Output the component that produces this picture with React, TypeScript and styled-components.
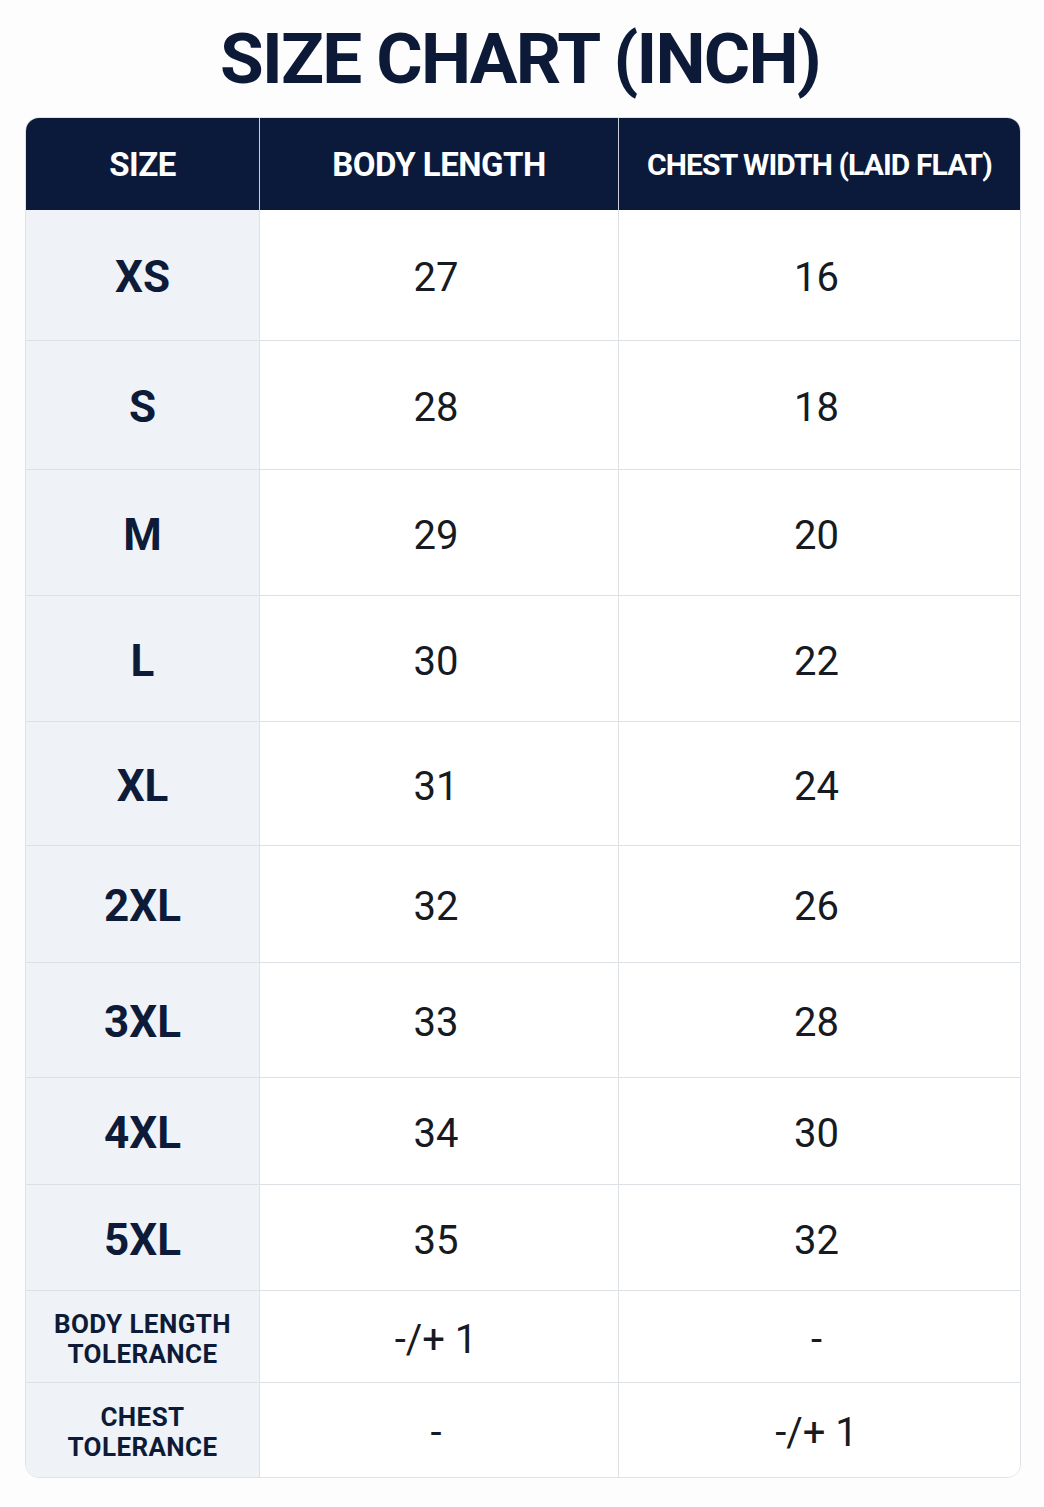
import React from "react";
import styled, { createGlobalStyle } from "styled-components";

const GlobalStyle = createGlobalStyle`
  html, body {
    margin: 0;
    padding: 0;
    background: #fdfdfd;
  }
  body {
    font-family: Roboto, "Noto Sans", "Liberation Sans", sans-serif;
  }
`;

const Page = styled.div`
  width: 1044px;
  min-height: 1507px;
  box-sizing: border-box;
  padding: 18px 23px 0 25px;
  display: flex;
  flex-direction: column;
  align-items: stretch;
`;

const Title = styled.h1`
  margin: 0 0 18px 0;
  height: 81px;
  display: flex;
  align-items: center;
  justify-content: center;
  font-family: Roboto, "Noto Sans", sans-serif;
  font-weight: 700;
  font-size: 71px;
  letter-spacing: -1.8px;
  color: #0c1a38;
  line-height: 1;
  padding-right: 6px;
`;

const Table = styled.div`
  width: 996px;
  box-sizing: border-box;
  border: 1px solid #dfe2e7;
  border-radius: 14px;
  overflow: hidden;
  display: grid;
  grid-template-columns: 234px 359px 1fr;
  background: #ffffff;
`;

const HeadCell = styled.div<{ $last?: boolean; $small?: boolean }>`
  height: 92px;
  background: #0b1a3a;
  color: #ffffff;
  display: flex;
  align-items: center;
  justify-content: center;
  font-family: Roboto, "Noto Sans", sans-serif;
  font-weight: 700;
  font-size: ${(p) => (p.$small ? "30px" : "33px")};
  letter-spacing: ${(p) => (p.$small ? "-0.9px" : "-0.5px")};
  border-right: ${(p) => (p.$last ? "none" : "1px solid #c9ced8")};
`;

const SizeCell = styled.div<{ $h: number; $bottom?: boolean }>`
  height: ${(p) => p.$h}px;
  box-sizing: border-box;
  padding-top: 4px;
  background: #eff3f8;
  color: #0d1b38;
  display: flex;
  align-items: center;
  justify-content: center;
  text-align: center;
  font-weight: 700;
  font-size: 44px;
  border-right: 1px solid #dde0e5;
  border-bottom: ${(p) => (p.$bottom ? "none" : "1px solid #dde0e5")};
`;

const NoteLabel = styled.span`
  font-size: 26px;
  line-height: 30px;
  letter-spacing: 0.4px;
`;

const ValueCell = styled.div<{ $h: number; $bottom?: boolean; $last?: boolean }>`
  height: ${(p) => p.$h}px;
  box-sizing: border-box;
  padding-top: 5px;
  padding-right: 6px;
  background: #ffffff;
  color: #161a22;
  display: flex;
  align-items: center;
  justify-content: center;
  font-weight: 400;
  font-size: 40px;
  border-right: ${(p) => (p.$last ? "none" : "1px solid #dde0e5")};
  border-bottom: ${(p) => (p.$bottom ? "none" : "1px solid #dde0e5")};
`;

type Row = { size: React.ReactNode; body: string; chest: string; h: number };

const rows: Row[] = [
  { size: "XS", body: "27", chest: "16", h: 131 },
  { size: "S", body: "28", chest: "18", h: 129 },
  { size: "M", body: "29", chest: "20", h: 126 },
  { size: "L", body: "30", chest: "22", h: 126 },
  { size: "XL", body: "31", chest: "24", h: 124 },
  { size: "2XL", body: "32", chest: "26", h: 117 },
  { size: "3XL", body: "33", chest: "28", h: 115 },
  { size: "4XL", body: "34", chest: "30", h: 107 },
  { size: "5XL", body: "35", chest: "32", h: 106 },
  {
    size: (
      <NoteLabel>
        BODY LENGTH
        <br />
        TOLERANCE
      </NoteLabel>
    ),
    body: "-/+ 1",
    chest: "-",
    h: 92,
  },
  {
    size: (
      <NoteLabel>
        CHEST
        <br />
        TOLERANCE
      </NoteLabel>
    ),
    body: "-",
    chest: "-/+ 1",
    h: 94,
  },
];

export default function App() {
  return (
    <>
      <GlobalStyle />
      <Page>
        <Title>SIZE CHART (INCH)</Title>
        <Table>
          <HeadCell>SIZE</HeadCell>
          <HeadCell>BODY LENGTH</HeadCell>
          <HeadCell $last $small>
            CHEST WIDTH (LAID FLAT)
          </HeadCell>
          {rows.map((r, i) => {
            const bottom = i === rows.length - 1;
            return (
              <React.Fragment key={i}>
                <SizeCell $h={r.h} $bottom={bottom}>
                  {r.size}
                </SizeCell>
                <ValueCell $h={r.h} $bottom={bottom}>
                  {r.body}
                </ValueCell>
                <ValueCell $h={r.h} $bottom={bottom} $last>
                  {r.chest}
                </ValueCell>
              </React.Fragment>
            );
          })}
        </Table>
      </Page>
    </>
  );
}
